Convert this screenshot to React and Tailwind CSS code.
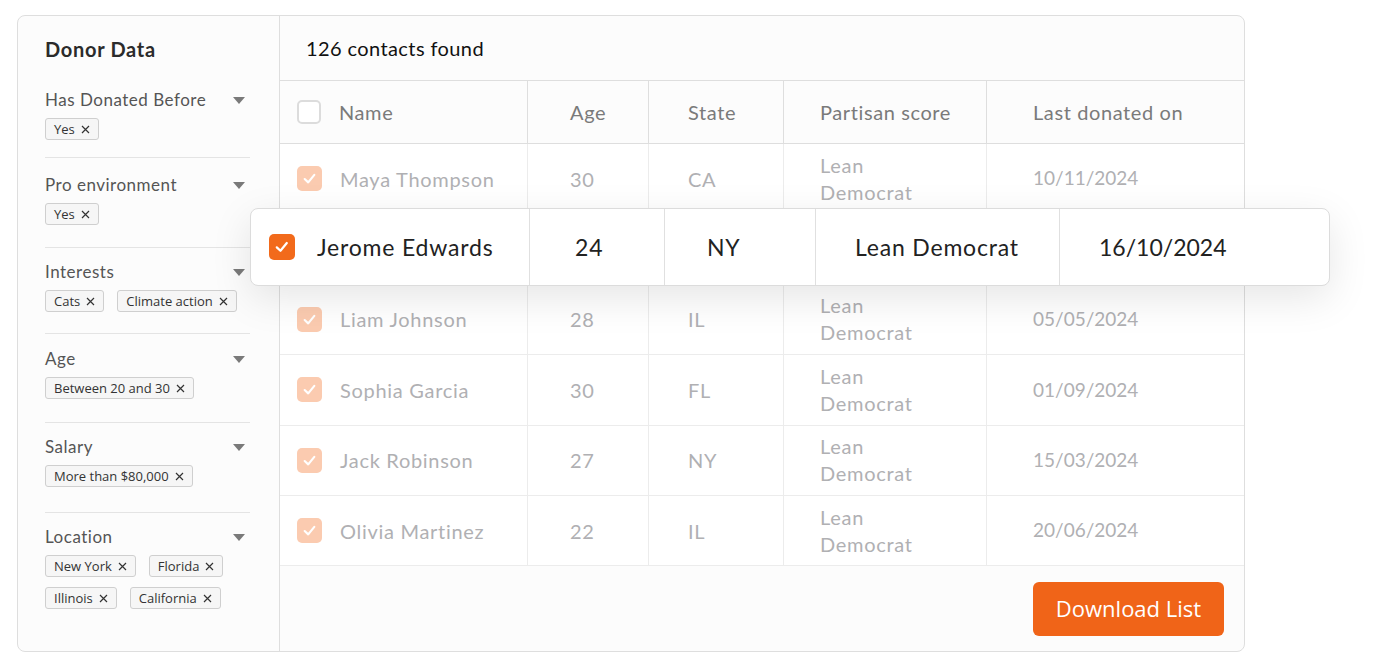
import React from "react";

const FONT = { fontFamily: "Lato, 'Open Sans', sans-serif" };
const CHIP_FONT = { fontFamily: "'Open Sans', 'Noto Sans', sans-serif" };

function Caret() {
  return (
    <svg width="12" height="7" viewBox="0 0 12 7" className="shrink-0">
      <path d="M0 0 L12 0 L6 7 Z" fill="#7a7a7a" />
    </svg>
  );
}

function Chip({ label }) {
  return (
    <span
      className="inline-flex items-center h-[22px] px-[8px] gap-[6px] border border-[#cfcfcf] bg-[#f6f6f6] rounded-[3px] text-[13px] text-[#333] leading-none"
      style={CHIP_FONT}
    >
      {label}
      <svg width="9" height="9" viewBox="0 0 9 9">
        <path d="M1 1 L8 8 M8 1 L1 8" stroke="#333" strokeWidth="1.2" />
      </svg>
    </span>
  );
}

const filters = [
  { label: "Has Donated Before", chips: [["Yes"]], pb: "pb-[17px]", pt: "pt-[0px]" },
  { label: "Pro environment", chips: [["Yes"]], pb: "pb-[22px]", pt: "pt-[15px]" },
  { label: "Interests", chips: [["Cats", "Climate action"]], pb: "pb-[21px]", pt: "pt-[12px]" },
  { label: "Age", chips: [["Between 20 and 30"]], pb: "pb-[23px]", pt: "pt-[13px]" },
  { label: "Salary", chips: [["More than $80,000"]], pb: "pb-[25px]", pt: "pt-[12px]" },
  { label: "Location", chips: [["New York", "Florida"], ["Illinois", "California"]], pb: "pb-0", pt: "pt-[12px]" },
];

function Check({ faded, size = 25 }) {
  return (
    <span
      className={`inline-flex items-center justify-center rounded-[5px] shrink-0 ${faded ? "bg-[#fbcbb0]" : "bg-[#f26a1b]"}`}
      style={{ width: size, height: size }}
    >
      <svg width={size * 0.6} height={size * 0.6} viewBox="0 0 14 14">
        <path d="M2.5 7.5 L5.8 10.6 L11.5 3.6" fill="none" stroke="white" strokeWidth="2" strokeLinecap="round" strokeLinejoin="round" />
      </svg>
    </span>
  );
}

const rows = [
  ["Maya Thompson", "30", "CA", "10/11/2024"],
  ["Jerome Edwards", "24", "NY", "16/10/2024", true],
  ["Liam Johnson", "28", "IL", "05/05/2024"],
  ["Sophia Garcia", "30", "FL", "01/09/2024"],
  ["Jack Robinson", "27", "NY", "15/03/2024"],
  ["Olivia Martinez", "22", "IL", "20/06/2024"],
];

export default function App() {
  return (
    <div className="relative w-[1385px] h-[671px] bg-white overflow-hidden pt-[15px] pl-[17px]" style={FONT}>
      <div className="flex w-[1228px] h-[637px] border border-[#dedede] rounded-[8px] bg-[#fcfcfc]">
        {/* Sidebar */}
        <aside className="w-[262px] shrink-0 border-r border-[#dedede] pl-[27px] pr-[29px] pt-[20px]">
          <h2 className="text-[20px] leading-[26px] font-bold text-[#2b2b2b] tracking-[0.035em]">Donor Data</h2>
          <div className="mt-[26px]">
            {filters.map((f, i) => (
              <div
                key={f.label}
                className={`${f.pt} ${f.pb} ${i < filters.length - 1 ? "border-b border-[#e4e4e4]" : ""}`}
              >
                <div className="flex items-center justify-between h-[24px] pr-[5px]">
                  <span className="text-[17px] text-[#555] tracking-[0.03em]">{f.label}</span>
                  <Caret />
                </div>
                <div className="mt-[6px] flex flex-col gap-[10px]">
                  {f.chips.map((row, ri) => (
                    <div key={ri} className="flex gap-[13px]">
                      {row.map((c) => (
                        <Chip key={c} label={c} />
                      ))}
                    </div>
                  ))}
                </div>
              </div>
            ))}
          </div>
        </aside>

        {/* Main */}
        <section className="flex-1 flex flex-col">
          <div className="h-[65px] border-b border-[#dedede] flex items-center pl-[26px]">
            <span className="text-[20px] text-[#111] tracking-[0.02em]">126 contacts found</span>
          </div>
          {/* header row */}
          <div className="flex h-[63px] border-b border-[#dedede] text-[20px] text-[#7a7a7a] tracking-[0.03em]">
            <div className="w-[248px] flex items-center pl-[17px] border-r border-[#dedede]">
              <span className="w-[24px] h-[24px] rounded-[5px] border-2 border-[#dcdcdc] bg-white" />
              <span className="ml-[18px]">Name</span>
            </div>
            <div className="w-[121px] flex items-center pl-[42px] border-r border-[#dedede]">Age</div>
            <div className="w-[135px] flex items-center pl-[39px] border-r border-[#dedede]">State</div>
            <div className="w-[203px] flex items-center pl-[36px] border-r border-[#dedede]">Partisan score</div>
            <div className="flex-1 flex items-center pl-[46px]">Last donated on</div>
          </div>
          {/* body */}
          <div className="flex flex-col bg-white">
            {rows.map((r) => (
              <div key={r[0]} className="flex h-[70.4px] border-b border-[#ececec] text-[20px] text-[#b0b0b3] tracking-[0.035em]">
                <div className="w-[248px] flex items-center pl-[17px] border-r border-[#ececec]">
                  {!r[4] && <Check faded />}
                  {!r[4] && <span className="ml-[18px]">{r[0]}</span>}
                </div>
                <div className="w-[121px] flex items-center pl-[42px] border-r border-[#ececec]">{!r[4] && r[1]}</div>
                <div className="w-[135px] flex items-center pl-[39px] border-r border-[#ececec]">{!r[4] && r[2]}</div>
                <div className="w-[203px] flex flex-col justify-center pl-[36px] leading-[27px] border-r border-[#ececec]">
                  {!r[4] && <span>Lean</span>}
                  {!r[4] && <span>Democrat</span>}
                </div>
                <div className="flex-1 flex items-center pl-[46px] text-[19px] tracking-normal">{!r[4] && r[3]}</div>
              </div>
            ))}
          </div>
          {/* footer */}
          <div className="flex-1 flex items-center justify-end pr-[20px]">
            <button
              className="w-[191px] h-[54px] rounded-[6px] bg-[#f06418] text-white text-[22px]"
              style={CHIP_FONT}
            >
              Download List
            </button>
          </div>
        </section>
      </div>

      {/* Floating highlighted row */}
      <div className="absolute left-[250px] top-[208px] w-[1080px] h-[78px] flex bg-white border border-[#dcdcdc] rounded-[8px] shadow-[0_12px_40px_rgba(0,0,0,0.10)] text-[23px] text-[#222] tracking-[0.035em]">
        <div className="w-[279px] flex items-center pl-[18px] border-r border-[#e0e0e0]">
          <Check size={26} />
          <span className="ml-[22px]">Jerome Edwards</span>
        </div>
        <div className="w-[135px] flex items-center pl-[45px] border-r border-[#e0e0e0]">24</div>
        <div className="w-[151px] flex items-center pl-[42px] border-r border-[#e0e0e0]">NY</div>
        <div className="w-[244px] flex items-center pl-[39px] border-r border-[#e0e0e0]">Lean Democrat</div>
        <div className="flex-1 flex items-center pl-[39px] tracking-normal">16/10/2024</div>
      </div>
    </div>
  );
}
